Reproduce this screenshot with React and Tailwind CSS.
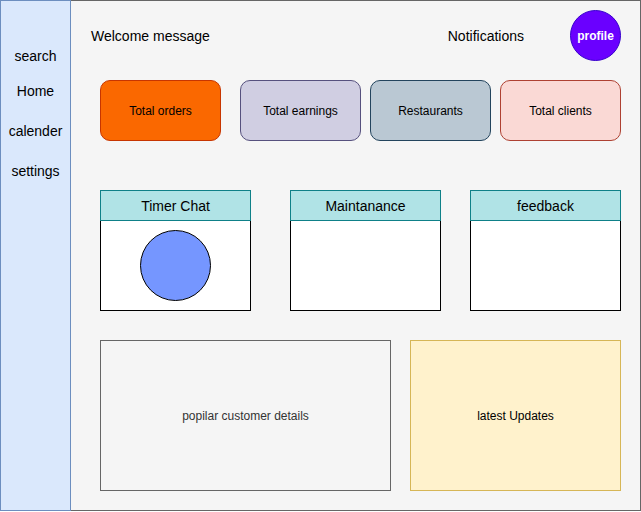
const navItems = [
  { label: "search", spacing: "" },
  { label: "Home", spacing: "mt-[15px]" },
  { label: "calender", spacing: "mt-5" },
  { label: "settings", spacing: "mt-5" },
];

const stats = [
  { label: "Total orders", style: "mr-[10px] border-[#c73500] bg-[#fa6800]" },
  { label: "Total earnings", style: "border-[#56517e] bg-[#d0cee2]" },
  { label: "Restaurants", style: "border-[#23445d] bg-[#bac8d3]" },
  { label: "Total clients", style: "border-[#ae4132] bg-[#fad9d5]" },
];

function Panel({ title, className = "", children }) {
  return (
    <section className={`flex h-[121px] flex-1 flex-col bg-white ${className}`}>
      <h2 className="flex h-[31px] items-center justify-center border border-[#0e8088] bg-[#b0e3e6] text-sm">
        {title}
      </h2>
      <div className="flex flex-1 justify-center border-x border-b border-black pt-[9px]">
        {children}
      </div>
    </section>
  );
}

export default function App() {
  return (
    <div className="flex font-['Liberation_Sans',Arial,sans-serif] text-black">
      <nav className="w-[71px] shrink-0 border border-[#6c8ebf] bg-[#dae8fc] pt-[45px]">
        <ul className="flex flex-col items-center text-sm">
          {navItems.map((item) => (
            <li key={item.label} className={item.spacing}>
              <a href="#">{item.label}</a>
            </li>
          ))}
        </ul>
      </nav>

      <main className="flex-1 border-y border-r border-[#666666] bg-[#f5f5f5] pt-[9px] pr-[19px] pb-[19px]">
        <header className="flex items-center pl-5 text-sm">
          <h1>Welcome message</h1>
          <button type="button" className="mr-[46px] ml-auto">
            Notifications
          </button>
          <button
            type="button"
            className="size-[51px] rounded-full border border-[#3700cc] bg-[#6a00ff] text-xs font-bold text-white"
          >
            profile
          </button>
        </header>

        <div className="pl-[29px]">
          <div className="mt-[19px] flex gap-[9px]">
            {stats.map((stat) => (
              <section
                key={stat.label}
                className={`flex h-[61px] flex-1 items-center justify-center rounded-[10px] border text-xs ${stat.style}`}
              >
                {stat.label}
              </section>
            ))}
          </div>

          <div className="mt-[49px] flex gap-[29px]">
            <Panel title="Timer Chat" className="mr-[10px]">
              <div className="size-[71px] rounded-full border border-black bg-[#7596ff]" />
            </Panel>
            <Panel title="Maintanance" />
            <Panel title="feedback" />
          </div>

          <div className="mt-[29px] grid grid-cols-[291fr_211fr] gap-[19px] text-xs">
            <section className="flex h-[151px] items-center justify-center border border-[#666666] text-[#333333]">
              popilar customer details
            </section>
            <section className="flex h-[151px] items-center justify-center border border-[#d6b656] bg-[#fff2cc]">
              latest Updates
            </section>
          </div>
        </div>
      </main>
    </div>
  );
}
